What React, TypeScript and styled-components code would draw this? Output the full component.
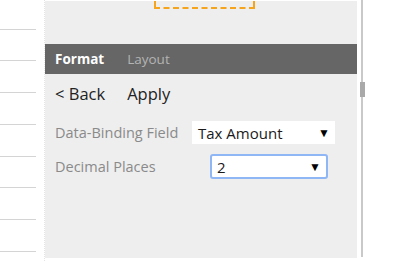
import React from "react";
import styled, { createGlobalStyle } from "styled-components";

const Global = createGlobalStyle`
  html, body { margin: 0; padding: 0; background: #ffffff; overflow: hidden; }
  body { font-family: "Open Sans", "Noto Sans", sans-serif; }
`;

const Page = styled.div`
  display: flex;
  width: 414px;
  height: 261px;
  background: #ffffff;
`;

const LeftColumn = styled.div`
  width: 44px;
  display: flex;
  flex-direction: column;
  border-right: 1px dotted #e4e4e4;
`;

const RuleLine = styled.div<{ $gap: number }>`
  width: 36px;
  height: 1px;
  background: #d4d4d4;
  margin-top: ${(p) => p.$gap}px;
`;

const Panel = styled.div`
  width: 312px;
  height: 257px;
  margin-top: 1px;
  background: #eeeeee;
  display: flex;
  flex-direction: column;
`;

const DropFrame = styled.div`
  margin-left: 109px;
  width: 97px;
  height: 6px;
  border: 2px dashed #f7a41d;
  border-top: none;
`;

const TabBar = styled.div`
  margin-top: 35px;
  height: 30px;
  background: #666666;
  display: flex;
  align-items: center;
  gap: 23px;
  padding-left: 10px;
  font-size: 13.5px;
`;

const Tab = styled.span<{ $active?: boolean }>`
  color: ${(p) => (p.$active ? "#ffffff" : "#b4b4b4")};
  font-weight: ${(p) => (p.$active ? 700 : 400)};
`;

const ActionRow = styled.div`
  display: flex;
  align-items: center;
  height: 38px;
  padding-left: 10px;
  gap: 22px;
  font-size: 16.5px;
  color: #222222;
`;

const Field = styled.div<{ $gap: number }>`
  display: flex;
  align-items: center;
  padding-left: 10px;
  margin-top: ${(p) => p.$gap}px;
  font-size: 14.5px;
`;

const Label = styled.span<{ $width: number }>`
  width: ${(p) => p.$width}px;
  color: #8a8a8a;
`;

const Select = styled.div<{ $width: number; $height: number; $focused?: boolean }>`
  box-sizing: border-box;
  width: ${(p) => p.$width}px;
  height: ${(p) => p.$height}px;
  background: #ffffff;
  border: ${(p) => (p.$focused ? "2px solid #8fb6f5" : "none")};
  border-radius: ${(p) => (p.$focused ? "3px" : "0")};
  display: flex;
  align-items: center;
  justify-content: space-between;
  padding: 0 5px 0 ${(p) => (p.$focused ? 5 : 6)}px;
  color: #1a1a1a;
  font-size: 15px;
`;

const Arrow = styled.span`
  font-size: 12px;
  color: #000000;
`;

const ScrollTrack = styled.div`
  margin-left: 4px;
  width: 2px;
  height: 257px;
  background: #c9c9c9;
  position: relative;
`;

const ScrollThumb = styled.div`
  position: absolute;
  left: -1px;
  top: 82px;
  width: 5px;
  height: 15px;
  background: #a9a9a9;
`;

const lineGaps = [29, 30, 31, 31, 31, 30, 31, 31];

export default function App() {
  return (
    <>
      <Global />
      <Page>
        <LeftColumn>
          {lineGaps.map((g, i) => (
            <RuleLine key={i} $gap={g} />
          ))}
        </LeftColumn>
        <Panel>
          <DropFrame />
          <TabBar>
            <Tab $active>Format</Tab>
            <Tab>Layout</Tab>
          </TabBar>
          <ActionRow>
            <span>&lt; Back</span>
            <span>Apply</span>
          </ActionRow>
          <Field $gap={9}>
            <Label $width={137}>Data-Binding Field</Label>
            <Select $width={143} $height={23}>
              <span>Tax Amount</span>
              <Arrow>▼</Arrow>
            </Select>
          </Field>
          <Field $gap={10}>
            <Label $width={155}>Decimal Places</Label>
            <Select $width={118} $height={25} $focused>
              <span>2</span>
              <Arrow>▼</Arrow>
            </Select>
          </Field>
        </Panel>
        <ScrollTrack>
          <ScrollThumb />
        </ScrollTrack>
      </Page>
    </>
  );
}
